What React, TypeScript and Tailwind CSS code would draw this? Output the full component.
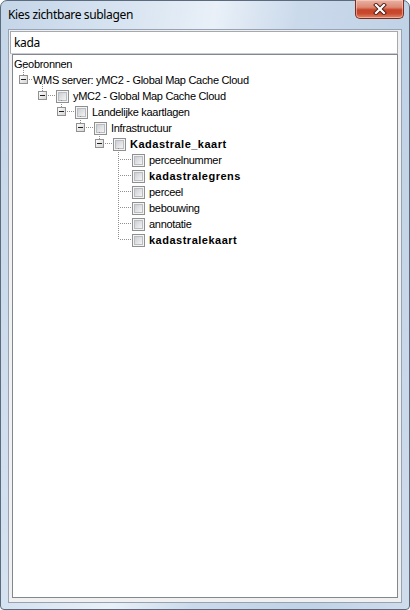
import React from "react";

type Node = {
  label: string;
  level: number;
  expander?: boolean;
  check?: boolean;
  bold?: boolean;
  first?: boolean;
  last?: boolean;
};

const nodes: Node[] = [
  { label: "Geobronnen", level: 0 },
  { label: "WMS server: yMC2 - Global Map Cache Cloud", level: 1, expander: true },
  { label: "yMC2 - Global Map Cache Cloud", level: 2, expander: true, check: true },
  { label: "Landelijke kaartlagen", level: 3, expander: true, check: true },
  { label: "Infrastructuur", level: 4, expander: true, check: true },
  { label: "Kadastrale_kaart", level: 5, expander: true, check: true, bold: true },
  { label: "perceelnummer", level: 6, check: true, first: true },
  { label: "kadastralegrens", level: 6, check: true, bold: true },
  { label: "perceel", level: 6, check: true },
  { label: "bebouwing", level: 6, check: true },
  { label: "annotatie", level: 6, check: true },
  { label: "kadastralekaart", level: 6, check: true, bold: true, last: true },
];

const DOT = "#8f8f8f";

// dotted tree line, one pixel on, one off
function vDots(x: number, from: number, to: number) {
  const out = [];
  for (let y = from; y <= to; y++) {
    if ((y & 1) === 0) out.push(<rect key={`v${x}-${y}`} x={x} y={y} width={1} height={1} fill={DOT} />);
  }
  return out;
}

function hDots(y: number, from: number, to: number) {
  const out = [];
  for (let x = from; x <= to; x++) {
    if ((x & 1) === 1) out.push(<rect key={`h${y}-${x}`} x={x} y={y} width={1} height={1} fill={DOT} />);
  }
  return out;
}

function Connector({ node }: { node: Node }) {
  const w = node.check ? 23 : 19;
  return (
    <svg width={w} height={16} className="shrink-0 overflow-visible" shapeRendering="crispEdges">
      <defs>
        <linearGradient id="exp" x1="0" y1="0" x2="1" y2="1">
          <stop offset="0" stopColor="#ffffff" />
          <stop offset="1" stopColor="#d2d2d2" />
        </linearGradient>
      </defs>
      {node.expander ? (
        <>
          {vDots(9, -4, 3)}
          <rect x={5.5} y={3.5} width={8} height={8} fill="url(#exp)" stroke="#919191" />
          <rect x={7} y={7} width={5} height={1} fill="#1e1e1e" />
          {hDots(7, 14, w - 2)}
        </>
      ) : (
        <>
          {vDots(9, node.first ? -4 : 0, node.last ? 7 : 15)}
          {hDots(7, 10, w - 2)}
        </>
      )}
    </svg>
  );
}

function CheckBox() {
  return (
    <svg width={13} height={13} className="shrink-0" shapeRendering="crispEdges">
      <defs>
        <linearGradient id="chk" x1="0" y1="0" x2="1" y2="1">
          <stop offset="0" stopColor="#c9ccd0" />
          <stop offset="1" stopColor="#f6f6f6" />
        </linearGradient>
      </defs>
      <rect x={0.5} y={0.5} width={12} height={12} fill="#f4f4f4" stroke="#8e8f8f" />
      <rect x={2.5} y={2.5} width={8} height={8} fill="url(#chk)" stroke="#b9bcc0" />
    </svg>
  );
}

function TreeRow({ node }: { node: Node }) {
  return (
    <div className="flex h-[16px] items-center">
      {node.level > 0 && <div className="shrink-0" style={{ width: 19 * (node.level - 1) }} />}
      {node.level > 0 && <Connector node={node} />}
      {node.check && <CheckBox />}
      <span
        className={`whitespace-nowrap leading-[16px] text-black ${node.check ? "ml-[4px]" : ""} ${
          node.bold ? "font-bold tracking-[0.5px]" : "tracking-[-0.3px]"
        }`}
      >
        {node.label}
      </span>
    </div>
  );
}

export default function App() {
  return (
    <div className="h-[610px] w-[410px] bg-white">
      <div className="flex h-full w-full flex-col rounded-t-[7px] rounded-b-[4px] border border-[#5b6a7c] bg-[linear-gradient(100deg,#c4d5e8_0%,#d8e4f1_25%,#e9f0f8_42%,#cbdaeb_58%,#c0d2e6_80%,#cfdcec_100%)]">
        {/* title bar */}
        <div className="flex h-[28px] shrink-0 items-start">
          <div className="pl-[7px] pt-[6px] font-['Noto_Sans',sans-serif] text-[12px] leading-[16px] tracking-[-0.35px] text-black">
            Kies zichtbare sublagen
          </div>
          <button className="ml-auto mr-[5px] -mt-px flex h-[19px] w-[49px] items-center justify-center rounded-b-[5px] border border-t-0 border-[#7a2e20] bg-[linear-gradient(180deg,#eab3a4_0%,#dc8a74_40%,#c6442a_55%,#c94a2e_75%,#e0876a_100%)] shadow-[inset_0_0_0_1px_rgba(255,220,210,0.5)]">
            <svg width={14} height={12} viewBox="0 0 14 12">
              <path d="M3 2 L11 10 M11 2 L3 10" stroke="#4a1b12" strokeWidth={4} strokeLinecap="square" />
              <path d="M3 2 L11 10 M11 2 L3 10" stroke="#ffffff" strokeWidth={2.2} strokeLinecap="square" />
            </svg>
          </button>
        </div>

        {/* client area */}
        <div className="mx-[7px] mb-[6px] flex flex-1 flex-col border border-[#97a3b2] bg-[#f0f0f0]">
          <div className="ml-px mr-[3px] mt-px flex h-[23px] items-center border border-[#a5a9b0] border-b-[#c9ccd2] bg-white pl-[3px] font-['Noto_Sans',sans-serif] text-[12px] tracking-[-0.35px] text-black">
            kada
          </div>
          <div className="mx-[3px] flex h-[544px] flex-col border border-[#828790] bg-white pl-px pt-px font-['Liberation_Sans',Arial,sans-serif] text-[11px]">
            {nodes.map((n) => (
              <TreeRow key={n.label} node={n} />
            ))}
          </div>
        </div>
      </div>
    </div>
  );
}
